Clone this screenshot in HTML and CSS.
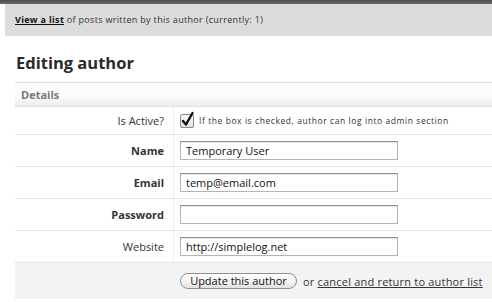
FILE: index.html
```html
<!DOCTYPE html>
<html>
<head>
<meta charset="utf-8">
<link rel="stylesheet" href="styles.css">
</head>
<body>
<div class="topbar"></div>
<div class="info"><a href="#" class="strong-link">View a list</a> of posts written by this author (currently: 1)</div>
<div class="main">
  <h1 class="title">Editing author</h1>
  <div class="section">
    <div class="section-head">Details</div>
    <div class="row row-first">
      <div class="label">Is Active?</div>
      <div class="field">
        <span class="checkbox">
          <svg width="17" height="17" viewBox="0 0 17 17">
            <defs>
              <linearGradient id="cb" x1="0" y1="0" x2="0" y2="1">
                <stop offset="0" stop-color="#ffffff"/>
                <stop offset="1" stop-color="#dcdcdc"/>
              </linearGradient>
            </defs>
            <rect x="0.5" y="3.5" width="13" height="13" rx="1.5" fill="url(#cb)" stroke="#8a8a8a"/>
            <path d="M3 10 L6 13.5 L12.5 2" fill="none" stroke="#111" stroke-width="2.4" stroke-linecap="round" stroke-linejoin="round"/>
          </svg>
        </span>
        <span class="hint">If the box is checked, author can log into admin section</span>
      </div>
    </div>
    <div class="row">
      <div class="label bold">Name</div>
      <div class="field"><span class="input">Temporary User</span></div>
    </div>
    <div class="row">
      <div class="label bold">Email</div>
      <div class="field"><span class="input">temp@email.com</span></div>
    </div>
    <div class="row">
      <div class="label bold">Password</div>
      <div class="field"><span class="input"></span></div>
    </div>
    <div class="row">
      <div class="label">Website</div>
      <div class="field"><span class="input">http://simplelog.net</span></div>
    </div>
    <div class="actions">
      <span class="button">Update this author</span>
      <span class="or">or <a href="#" class="plain-link">cancel and return to author list</a></span>
    </div>
  </div>
</div>
</body>
</html>
```
FILE: styles.css
```css
html, body {
  margin: 0;
  padding: 0;
  background: #ffffff;
}
body {
  font-family: "Open Sans", "DejaVu Sans", sans-serif;
  color: #333333;
  width: 492px;
  height: 302px;
  overflow: hidden;
}
.topbar {
  height: 4px;
  background: linear-gradient(#4e4e4e, #6a6a6a);
}
.info {
  margin-left: 5px;
  height: 32px;
  box-sizing: border-box;
  padding-left: 10px;
  background: #dcdcdc;
  font-size: 9px;
  line-height: 32px;
  letter-spacing: 0.32px;
  color: #333;
}
.strong-link {
  color: #111;
  font-weight: bold;
  text-decoration: underline;
}
.main {
  padding-left: 15px;
}
.title {
  margin: 17px 0 9px 1px;
  font-size: 16.5px;
  line-height: 20px;
  font-weight: bold;
  color: #2a2a2a;
}
.section-head {
  height: 23px;
  line-height: 23px;
  border-top: 1px solid #dedede;
  border-bottom: 1px solid #e2e2e2;
  background: linear-gradient(#ffffff, #fbfbfb 55%, #ededed);
  padding-left: 6px;
  font-size: 11px;
  font-weight: bold;
  color: #777;
}
.row {
  display: flex;
  height: 32px;
  box-sizing: border-box;
  border-bottom: 1px solid #e6e6e6;
}
.row-first {
  height: 28px;
}
.label {
  width: 159px;
  box-sizing: border-box;
  border-right: 1px solid #efefef;
  padding-right: 9px;
  display: flex;
  align-items: center;
  justify-content: flex-end;
  font-size: 11px;
  color: #333;
}
.bold {
  font-weight: bold;
}
.field {
  display: flex;
  align-items: center;
  padding-left: 6px;
}
.checkbox {
  display: flex;
  width: 17px;
  height: 17px;
  margin-top: -2px;
}
.hint {
  margin-left: 2px;
  font-size: 8.5px;
  letter-spacing: 0.57px;
  color: #333;
}
.input {
  display: block;
  width: 218px;
  height: 19px;
  box-sizing: border-box;
  border: 1px solid #b4b4b4;
  border-top-color: #8c8c8c;
  box-shadow: inset 0 1px 0 #e8e8e8;
  padding-left: 5px;
  font-size: 11px;
  line-height: 17px;
  color: #111;
  background: #fff;
}
.actions {
  height: 36px;
  background: #f3f3f3;
  display: flex;
  align-items: center;
  padding-left: 165px;
  font-size: 11px;
}
.button {
  display: block;
  height: 16px;
  width: 117px;
  box-sizing: border-box;
  border: 1px solid #8e8e8e;
  border-radius: 8px;
  background: linear-gradient(#ffffff, #f4f4f4 50%, #e2e2e2);
  text-align: center;
  line-height: 14px;
  font-size: 11px;
  color: #111;
}
.or {
  margin-left: 6px;
  color: #333;
  letter-spacing: 0.2px;
}
.plain-link {
  color: #333;
  text-decoration: underline;
}
```
